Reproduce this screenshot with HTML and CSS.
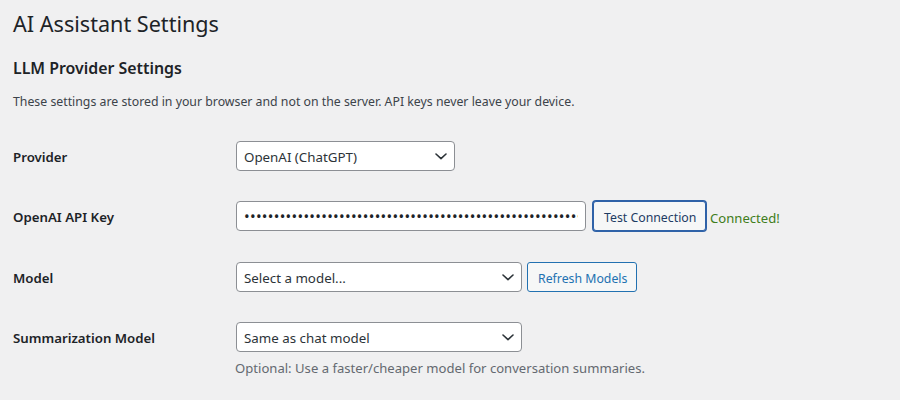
FILE: index.html
```html
<!DOCTYPE html>
<html lang="en">
<head>
<meta charset="utf-8">
<title>AI Assistant Settings</title>
<link rel="stylesheet" href="styles.css">
</head>
<body>
<div class="wrap">
  <h1 class="page-title">AI Assistant Settings</h1>
  <h2 class="section-title">LLM Provider Settings</h2>
  <p class="intro">These settings are stored in your browser and not on the server. API keys never leave your device.</p>

  <div class="form-rows">
    <div class="form-row">
      <label class="field-label" for="provider">Provider</label>
      <div class="field">
        <div class="select-wrap select-provider">
          <select id="provider" class="select"><option>OpenAI (ChatGPT)</option></select>
          <svg class="chevron" width="12" height="7" viewBox="0 0 12 7"><path d="M1 1 L6 5.6 L11 1" fill="none" stroke="#2c3338" stroke-width="1.6" stroke-linecap="round" stroke-linejoin="round"/></svg>
        </div>
      </div>
    </div>

    <div class="form-row">
      <label class="field-label" for="apikey">OpenAI API Key</label>
      <div class="field">
        <input id="apikey" class="text-input api-input" type="password" value="sk-proj-aaaaaaaaaaaaaaaaaaaaaaaaaaaaaaaaaaaaaaaaaaaaaaaaaaaaaaaaaaaa">
        <button class="button button-focus" type="button">Test Connection</button>
        <span class="status-ok">Connected!</span>
      </div>
    </div>

    <div class="form-row">
      <label class="field-label" for="model">Model</label>
      <div class="field">
        <div class="select-wrap select-wide">
          <select id="model" class="select"><option>Select a model...</option></select>
          <svg class="chevron" width="12" height="7" viewBox="0 0 12 7"><path d="M1 1 L6 5.6 L11 1" fill="none" stroke="#2c3338" stroke-width="1.6" stroke-linecap="round" stroke-linejoin="round"/></svg>
        </div>
        <button class="button button-secondary" type="button">Refresh Models</button>
      </div>
    </div>

    <div class="form-row form-row-top">
      <label class="field-label" for="summary">Summarization Model</label>
      <div class="field field-stack">
        <div class="select-wrap select-wide">
          <select id="summary" class="select"><option>Same as chat model</option></select>
          <svg class="chevron" width="12" height="7" viewBox="0 0 12 7"><path d="M1 1 L6 5.6 L11 1" fill="none" stroke="#2c3338" stroke-width="1.6" stroke-linecap="round" stroke-linejoin="round"/></svg>
        </div>
        <p class="description">Optional: Use a faster/cheaper model for conversation summaries.</p>
      </div>
    </div>
  </div>
</div>
</body>
</html>
```
FILE: styles.css
```css
html, body {
  margin: 0;
  padding: 0;
  background: #f0f0f1;
}
body {
  font-family: "Noto Sans", "Open Sans", sans-serif;
  color: #1d2327;
}
.wrap {
  padding-left: 13px;
}
.page-title {
  margin: 9px 0 0;
  font-size: 21.6px;
  line-height: 30px;
  font-weight: 400;
  color: #1d2327;
}
.section-title {
  margin: 17.5px 0 0;
  font-size: 15.9px;
  line-height: 22px;
  font-weight: 600;
  color: #1d2327;
}
.intro {
  margin: 14.7px 0 0;
  font-size: 12.3px;
  line-height: 18px;
  color: #3c434a;
}
.form-rows {
  display: flex;
  flex-direction: column;
  gap: 30.5px;
  padding-top: 29.5px;
}
.form-row {
  display: flex;
  align-items: center;
}
.form-row-top {
  align-items: flex-start;
}
.field-label {
  box-sizing: border-box;
  width: 223px;
  flex: none;
  height: 30px;
  padding-top: 2px;
  font-size: 13.26px;
  font-weight: 600;
  line-height: 28px;
  color: #1d2327;
}
.field {
  display: flex;
  align-items: center;
}
.field-stack {
  flex-direction: column;
  align-items: flex-start;
}
.select-wrap {
  position: relative;
  height: 30px;
}
.select-provider { width: 219px; }
.select-wide { width: 286px; }
.select {
  -webkit-appearance: none;
  appearance: none;
  box-sizing: border-box;
  width: 100%;
  height: 30px;
  margin: 0;
  padding: 2px 24px 0 7px;
  border: 1px solid #8c8f94;
  border-radius: 4px;
  background: #fff;
  font-family: "Noto Sans", "Open Sans", sans-serif;
  font-size: 13.33px;
  color: #2c3338;
  line-height: 26px;
}
.chevron {
  position: absolute;
  right: 8px;
  top: 12px;
  pointer-events: none;
}
.text-input {
  box-sizing: border-box;
  height: 30px;
  margin: 0;
  border: 1px solid #8c8f94;
  border-radius: 4px;
  background: #fff;
  color: #2c3338;
  font-family: "Noto Sans", "Open Sans", sans-serif;
}
.api-input {
  width: 350px;
  padding: 0 7px;
  font-size: 15px;
  letter-spacing: 0.3px;
  color: #1d2327;
}
.button {
  box-sizing: border-box;
  height: 30px;
  margin: 0;
  padding: 3px 10px 0;
  border: 1px solid #2271b1;
  border-radius: 3px;
  background: #f6f7f7;
  color: #2271b1;
  font-family: "Noto Sans", "Open Sans", sans-serif;
  font-size: 12.3px;
  line-height: 25px;
  white-space: nowrap;
}
.button-focus {
  margin-left: 7px;
  width: 113px;
  color: #1d3c63;
  border-color: #2f62a8;
  box-shadow: 0 0 0 1px #2f62a8;
}
.button-secondary {
  margin-left: 5px;
  width: 110px;
}
.status-ok {
  margin-left: 4px;
  padding-top: 3px;
  font-size: 13.1px;
  color: #3f7d20;
}
.description {
  margin: 7px 0 0 -1px;
  font-size: 13.1px;
  line-height: 18px;
  color: #646970;
}
```
